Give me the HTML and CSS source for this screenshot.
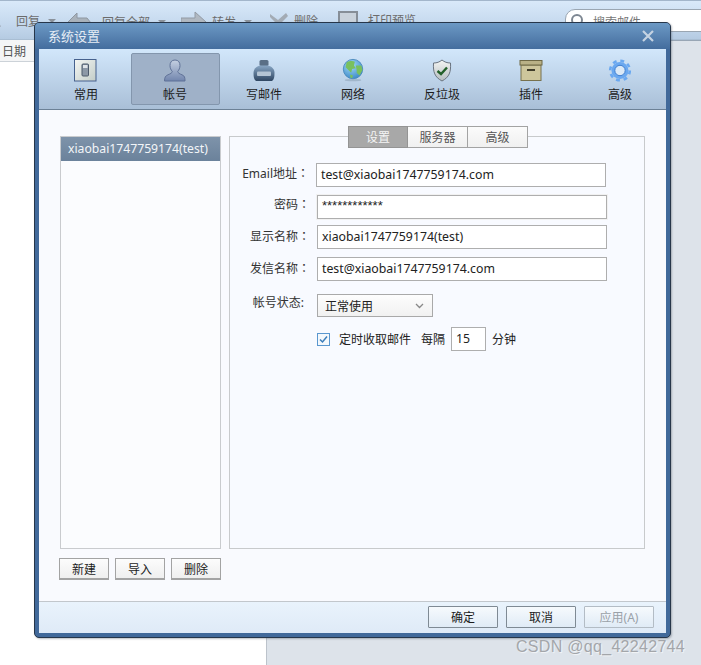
FILE: index.html
```html
<!DOCTYPE html>
<html lang="zh">
<head>
<meta charset="utf-8">
<title>系统设置</title>
<link rel="stylesheet" href="styles.css">
</head>
<body>
<div class="app">
  <header class="app-toolbar">
    <div class="app-tool app-reply"><svg class="app-ico" width="28" height="20" viewBox="0 0 28 20"><path d="M0 14 C6 4 14 6 18 16 L10 12 Z" fill="#9aa3ad"/></svg><span>回复</span><i class="caret"></i></div>
    <div class="app-tool app-replyall"><svg class="app-ico" width="30" height="22" viewBox="0 0 30 22"><path d="M0 12 10 2v5h4l6 0 8 10H10v4Z" fill="#a9b2bb" stroke="#8e97a1"/></svg><span>回复全部</span><i class="caret"></i></div>
    <div class="app-tool app-forward"><svg class="app-ico" width="26" height="22" viewBox="0 0 26 22"><path d="M0 7h14V1l11 10-11 10v-6H0Z" fill="#b0b8c1" stroke="#929aa4"/></svg><span>转发</span><i class="caret"></i></div>
    <div class="app-tool app-delete"><svg class="app-ico" width="20" height="20" viewBox="0 0 20 20"><path d="M1 3 9 9 17 2 19 5 12 12 13 20H9L8 13 1 6Z" fill="#a3abb4"/></svg><span>删除</span></div>
    <div class="app-tool app-print"><svg class="app-ico" width="20" height="18" viewBox="0 0 20 18"><rect x="1" y="1" width="18" height="16" fill="#c9d2db" stroke="#868e97" stroke-width="2"/></svg><span>打印预览</span></div>
    <div class="app-search"><svg width="14" height="14" viewBox="0 0 14 14"><circle cx="7" cy="7" r="5" fill="none" stroke="#7d8792" stroke-width="2"/></svg><span>搜索邮件</span></div>
  </header>
  <div class="app-main">
    <div class="app-list">
      <div class="app-list-head"><span>日期</span><i class="caret dark"></i></div>
    </div>
    <div class="app-read"></div>
  </div>
</div>

<section class="dialog">
  <div class="dialog-title"><span>系统设置</span>
    <svg class="close" width="12" height="12" viewBox="0 0 12 12"><path d="M1 1 11 11M11 1 1 11" stroke="#c5d3e2" stroke-width="2.200"/></svg>
  </div>
  <div class="dialog-inner">
    <nav class="nav">
      <div class="nav-item">
        <svg width="26" height="24" viewBox="0 0 26 24"><defs><linearGradient id="g1" x1="0" y1="0" x2="1" y2="1"><stop offset="0" stop-color="#f4f6f3"/><stop offset="1" stop-color="#c3cdc8"/></linearGradient></defs><rect x="1.500" y="1.500" width="21.500" height="21.500" fill="url(#g1)" stroke="#46618d"/><rect x="9" y="6" width="6.500" height="12" rx="1" fill="#8c98a6" stroke="#4d5a6b"/><rect x="10" y="7" width="4.500" height="3" fill="#dfe4e8"/></svg>
        <span>常用</span>
      </div>
      <div class="nav-item active">
        <svg width="26" height="24" viewBox="0 0 26 24"><defs><linearGradient id="g2" x1="0" y1="0" x2="0" y2="1"><stop offset="0" stop-color="#c5d0e2"/><stop offset="1" stop-color="#7185ad"/></linearGradient></defs><path d="M13 2c3.500 0 5 2.500 5 5.500 0 2.500-1 4.500-2.300 6 .3 1.500 1.800 2.300 4.300 3.300 2.600 1 3 2.700 3 6.200H2.500c0-3.500.9-5.200 3.500-6.200 2.500-1 4-1.800 4.300-3.300C9 12 8 10 8 7.500 8 4.500 9.500 2 13 2Z" fill="url(#g2)" stroke="#5f7197"/></svg>
        <span>帐号</span>
      </div>
      <div class="nav-item">
        <svg width="26" height="24" viewBox="0 0 26 24"><defs><linearGradient id="g3" x1="0" y1="0" x2="0" y2="1"><stop offset="0" stop-color="#88a6c4"/><stop offset="1" stop-color="#2f4662"/></linearGradient></defs><rect x="8.500" y="2" width="9" height="6" rx="1.500" fill="#5a6f86"/><path d="M9 7.500h8c4 1 6.500 3.500 6.500 7.500 0 4-.5 6.500-2.500 8H5c-2-1.500-2.500-4-2.500-8 0-4 2.500-6.500 6.500-7.500Z" fill="url(#g3)"/><rect x="6" y="13.500" width="14" height="4.500" rx="1" fill="#b4c4d4"/></svg>
        <span>写邮件</span>
      </div>
      <div class="nav-item">
        <svg width="26" height="26" viewBox="0 0 26 26"><defs><radialGradient id="g4" cx=".4" cy=".3" r=".85"><stop offset="0" stop-color="#a6dcf8"/><stop offset="1" stop-color="#2a7cc0"/></radialGradient></defs><circle cx="13" cy="12" r="10.500" fill="url(#g4)" stroke="#4a8abd"/><path d="M6 5c3-2 7-2 9-1l-1 4 2 3-4 1-1 4-3-3-3-3ZM16 8l6 0 1.300 5-3.300 6-3-3 0-3ZM10 18l3 1-1 3-2-1Z" fill="#79c05e"/><ellipse cx="13" cy="24" rx="9" ry="1.200" fill="#8ea3b8" opacity=".6"/></svg>
        <span>网络</span>
      </div>
      <div class="nav-item">
        <svg width="26" height="24" viewBox="0 0 26 24"><defs><linearGradient id="g5" x1="0" y1="0" x2="0" y2="1"><stop offset="0" stop-color="#f5f6f4"/><stop offset="1" stop-color="#b5bdc0"/></linearGradient></defs><path d="M13 2c2.500 2 5 3 8.500 3 .5 9-1 14-8.500 18C5.500 19 4 14 4.500 5 8 5 10.500 4 13 2Z" fill="url(#g5)" stroke="#6a7480"/><path d="M8.500 13 12 16 18 9.500" fill="none" stroke="#23602a" stroke-width="2.400"/></svg>
        <span>反垃圾</span>
      </div>
      <div class="nav-item">
        <svg width="26" height="24" viewBox="0 0 26 24"><rect x="3" y="7" width="20" height="15.500" fill="#cdc69c" stroke="#77714e"/><rect x="2" y="2.500" width="22" height="4.500" fill="#b9b186" stroke="#6e6845"/><rect x="9" y="11" width="8" height="2" fill="#3f3c2a"/></svg>
        <span>插件</span>
      </div>
      <div class="nav-item">
        <svg width="26" height="24" viewBox="0 0 26 24"><circle cx="13" cy="12.500" r="8.500" fill="#6aa8f0"/><circle cx="13" cy="12.500" r="9.800" fill="none" stroke="#6aa8f0" stroke-width="2.600" stroke-dasharray="3.900 3.800"/><circle cx="13" cy="12.500" r="5.200" fill="#dbe9f7" stroke="#3f7fd0" stroke-width="1"/></svg>
        <span>高级</span>
      </div>
    </nav>

    <div class="content">
      <div class="accounts">
        <div class="account-list">
          <div class="account-row">xiaobai1747759174(test)</div>
        </div>
        <div class="account-actions">
          <button class="btn btn-small">新建</button>
          <button class="btn btn-small">导入</button>
          <button class="btn btn-small">删除</button>
        </div>
      </div>

      <div class="settings">
        <div class="tabs">
          <span class="tab tab-on">设置</span><span class="tab">服务器</span><span class="tab">高级</span>
        </div>
        <div class="form">
          <div class="row row-email">
            <label class="lbl">Email地址<span class="colon" lang="zh-TW">：</span></label>
            <div class="input">test@xiaobai1747759174.com</div>
          </div>
          <div class="row row-pass">
            <label class="lbl">密码<span class="colon" lang="zh-TW">：</span></label>
            <div class="input input-pass">************</div>
          </div>
          <div class="row row-show">
            <label class="lbl">显示名称<span class="colon" lang="zh-TW">：</span></label>
            <div class="input">xiaobai1747759174(test)</div>
          </div>
          <div class="row row-send">
            <label class="lbl">发信名称<span class="colon" lang="zh-TW">：</span></label>
            <div class="input">test@xiaobai1747759174.com</div>
          </div>
          <div class="row row-status">
            <label class="lbl">帐号状态:</label>
            <div class="select"><span>正常使用</span>
              <svg width="9" height="6" viewBox="0 0 9 6"><path d="M1 1 4.500 4.500 8 1" fill="none" stroke="#888" stroke-width="1.300"/></svg>
            </div>
          </div>
          <div class="row-check">
            <span class="check"><svg width="13" height="13" viewBox="0 0 13 13"><rect x=".5" y=".5" width="12" height="12" fill="#f4f8fc" stroke="#5a97cf"/><path d="M3 6.500 5.500 9 10 3.500" fill="none" stroke="#3b7dba" stroke-width="1.500"/></svg></span>
            <span class="check-label">定时收取邮件</span>
            <span class="every">每隔</span>
            <div class="input input-num">15</div>
            <span class="unit">分钟</span>
          </div>
        </div>
      </div>
    </div>

    <footer class="footer">
      <button class="btn btn-foot">确定</button>
      <button class="btn btn-foot">取消</button>
      <button class="btn btn-foot btn-off">应用(A)</button>
    </footer>
  </div>
</section>

<div class="watermark">CSDN @qq_42242744</div>
</body>
</html>
```

FILE: styles.css
```css
* { box-sizing: border-box; }
html, body { margin: 0; padding: 0; }
body {
  width: 701px;
  height: 665px;
  overflow: hidden;
  position: relative;
  background: #fff;
  font-family: "Noto Sans", "Noto Sans CJK SC", sans-serif;
  font-size: 12px;
  color: #222;
}

/* background mail client */
.app { display: flex; flex-direction: column; height: 665px; }
.app-toolbar {
  height: 40px;
  flex: none;
  border-top: 1px solid #a3b6cb;
  border-bottom: 1px solid #a9bed3;
  background: linear-gradient(#d9e9f9, #c5d9ee 60%, #b5cbe2);
  color: #6c6c6c;
  position: relative;
}
.app-tool { position: absolute; top: 10px; display: flex; align-items: center; gap: 5px; white-space: nowrap; }
.app-reply { left: -17px; }
.app-replyall { left: 67px; }
.app-forward { left: 181px; }
.app-delete { left: 269px; }
.app-print { left: 338px; gap: 10px; }
.caret { width: 0; height: 0; border: 4px solid transparent; border-top: 4px solid #8a929b; border-bottom: 0; margin-left: 3px; }
.caret.dark { border-top-color: #555; }
.app-search {
  position: absolute;
  left: 565px;
  top: 8px;
  width: 160px;
  height: 23px;
  padding: 3px 0 0 4px;
  display: flex;
  gap: 9px;
  border: 1px solid #9aa6b2;
  border-radius: 10px 0 0 0;
  background: #fff;
  color: #777;
}
.app-main { flex: 1; display: flex; }
.app-list { width: 267px; flex: none; border-right: 1px solid #bcc3cb; background: #fff; }
.app-list-head {
  height: 22px;
  padding-left: 2px;
  display: flex;
  align-items: center;
  gap: 5px;
  border-bottom: 1px solid #ccd2d8;
  background: #f4f5f6;
  color: #555;
}
.app-read { flex: 1; background: #dde3ea; border-top: 1px solid #98a6b5; }

/* dialog window */
.dialog {
  position: absolute;
  left: 34px;
  top: 22px;
  width: 637px;
  height: 616px;
  display: flex;
  flex-direction: column;
  padding: 0 4px 4px 4px;
  background: #41699a;
  border: 1px solid #26364a;
  border-radius: 5px;
  box-shadow: 1px 1px 2px rgba(60, 70, 80, .35);
}
.dialog-title {
  height: 26px;
  flex: none;
  margin: 0 -4px;
  padding: 0 16px 2px 13px;
  display: flex;
  align-items: center;
  justify-content: space-between;
  background: linear-gradient(#6c99c5, #446d9e);
  border-radius: 4px 4px 0 0;
  color: #e6edf5;
  font-size: 13px;
}
.close { margin-top: 2px; }
.dialog-inner { flex: 1; display: flex; flex-direction: column; min-height: 0; background: #f9fafe; }

.nav {
  height: 61px;
  flex: none;
  padding: 4px 0 0 3px;
  display: flex;
  align-items: flex-start;
  border-bottom: 1px solid #6c8196;
  background: linear-gradient(#d2e7fb, #a9bfd7);
}
.nav-item {
  width: 89px;
  height: 52px;
  flex: none;
  padding: 4px 1px 0 0;
  display: flex;
  flex-direction: column;
  align-items: center;
  border: 1px solid transparent;
  border-radius: 2px;
  color: #1c1c1c;
}
.nav-item svg { height: 24px; display: block; margin-bottom: 4px; overflow: visible; }
.nav-item span { line-height: 17px; }
.nav-item.active { background: #9fb1c8; border-color: #8396ad; }

.content { flex: 1; display: flex; min-height: 0; padding: 26px 21px 0 20px; }
.accounts { width: 170px; flex: none; }
.account-list { width: 161px; margin-left: 1px; height: 413px; border: 1px solid #c9cbce; background: #fbfcfe; }
.account-row {
  height: 24px;
  padding-left: 7px;
  line-height: 23px;
  font-size: 12.2px;
  color: #f2f5f8;
  background: linear-gradient(#7e93aa, #6b829b);
  white-space: nowrap;
}
.account-actions { display: flex; gap: 6px; margin-top: 9px; }

.btn {
  display: block;
  padding: 0;
  height: 22px;
  font: inherit;
  color: #1c1c1c;
  border: 1px solid #a3a3a3;
  border-bottom-width: 2px;
  background: linear-gradient(#fcfcfc, #efefef);
}
.btn-small { width: 50px; }

.settings {
  width: 416px;
  height: 413px;
  border: 1px solid #c8cacc;
  background: #f8faff;
  position: relative;
}
.tabs {
  position: absolute;
  left: 118px;
  top: -11px;
  display: flex;
}
.tab {
  width: 60px;
  height: 22px;
  text-align: center;
  line-height: 22px;
  border: 1px solid #a3a3a3;
  border-left-width: 0;
  background: linear-gradient(#fbfbfb, #f0f0f0);
  color: #555;
}
.tab:first-child { border-left-width: 1px; }
.tab-on { background: #a8a8a8; border-color: #949494; color: #f4f4f4; }

.form { padding-top: 26px; }
.row { display: flex; align-items: flex-start; height: 24px; }
.row-pass { margin-top: 8px; }
.row-show { margin-top: 6px; }
.row-send { margin-top: 8px; }
.row-status { margin-top: 13px; height: 23px; }
.lbl {
  width: 87px;
  flex: none;
  padding-right: 7px;
  text-align: right;
  color: #333;
  line-height: 17px;
  white-space: nowrap;
}
.colon { font-family: "Noto Sans CJK TC", sans-serif; }
.row-email .lbl { width: 86px; padding-top: 1px; }
.row-pass .lbl { padding-top: 0; }
.row-show .lbl, .row-send .lbl { padding-top: 2px; }
.row-status .lbl { padding: 0 13px 0 0; }
.input {
  width: 290px;
  height: 24px;
  padding-left: 4px;
  line-height: 22px;
  font-size: 12.3px;
  color: #222;
  background: #fff;
  border: 1px solid #aeaeae;
  white-space: nowrap;
}
.input-pass {
  line-height: 20px;
  font-family: "Liberation Sans", sans-serif;
  font-size: 13px;
  box-shadow: 0 0 0 1px #f1f1f1;
}
.select {
  width: 116px;
  height: 23px;
  padding: 0 8px 0 7px;
  display: flex;
  align-items: center;
  justify-content: space-between;
  border: 1px solid #a9a9a9;
  background: linear-gradient(#fdfdfd, #f1f1f1);
  color: #222;
}
.row-check { display: flex; align-items: center; height: 24px; margin-top: 10px; padding-left: 87px; white-space: nowrap; }
.check { display: block; width: 13px; height: 13px; margin-right: 9px; }
.check svg { display: block; }
.check-label { width: 72px; margin-right: 10px; }
.input-num { width: 35px; margin: 0 6px; }

.footer {
  height: 32px;
  flex: none;
  padding: 4px 12px 0 0;
  display: flex;
  justify-content: flex-end;
  gap: 8px;
  border-top: 1px solid #c2c7cc;
  background: linear-gradient(#e9f3fc, #dfeaf7);
}
.btn-foot {
  width: 70px;
  height: 22px;
  border: 1px solid #7f8a94;
  border-radius: 1px;
  background: linear-gradient(#f6fafd, #e0ebf6);
}
.btn-off { border-color: #b3bcc5; color: #9aa1a8; }

.watermark {
  position: absolute;
  left: 516px;
  top: 638px;
  font-family: "Liberation Sans", sans-serif;
  font-size: 16px;
  line-height: 18px;
  letter-spacing: .3px;
  color: #a3a6aa;
  text-shadow: 1px 1px 1px rgba(255,255,255,.7);
  white-space: nowrap;
}
```
